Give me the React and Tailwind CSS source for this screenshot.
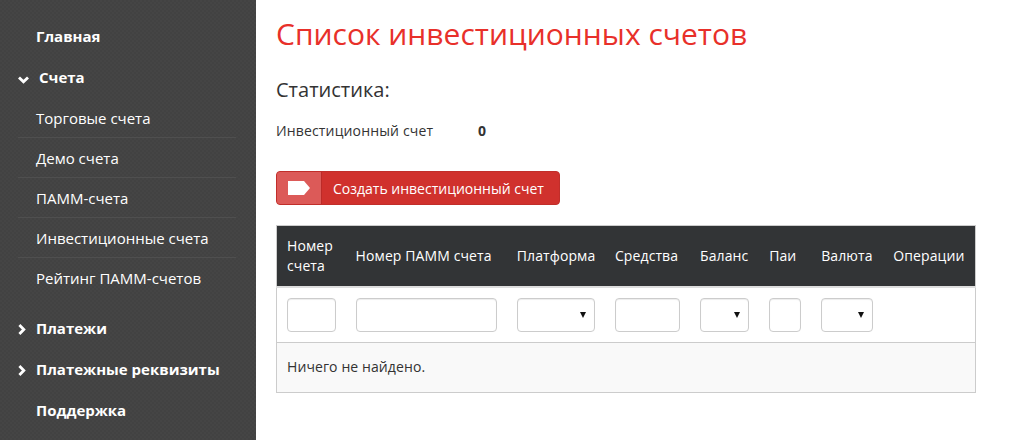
import React from 'react';

const subItems = ['Торговые счета', 'Демо счета', 'ПАММ-счета', 'Инвестиционные счета', 'Рейтинг ПАММ-счетов'];

const columns = [
  { title: <>Номер<br />счета</>, width: 'w-[69px]', filter: 'input', field: 'w-[49px]' },
  { title: 'Номер ПАММ счета', width: 'w-[161px]', filter: 'input', field: 'w-[141px]' },
  { title: 'Платформа', width: 'w-[98px]', filter: 'select', field: 'w-[78px]' },
  { title: 'Средства', width: 'w-[85px]', filter: 'input', field: 'w-[65px]' },
  { title: 'Баланс', width: 'w-[69px]', filter: 'select', field: 'w-[49px]' },
  { title: 'Паи', width: 'w-[52px]', filter: 'input', field: 'w-[32px]' },
  { title: 'Валюта', width: 'w-[72px]', filter: 'select', field: 'w-[52px]' },
  { title: 'Операции', width: 'w-[92px]' },
];

const ArrowDown = () => (
  <svg className="absolute left-[18px] top-[19px] w-[11px] h-[8px]" viewBox="0 0 11 8">
    <path d="M1 1.4L5.5 5.8L10 1.4" fill="none" stroke="#ffffff" strokeWidth="2.8" />
  </svg>
);

const ArrowRight = () => (
  <svg className="absolute left-[18px] top-[16px] w-[8px] h-[11px]" viewBox="0 0 8 11">
    <path d="M1.4 1L5.8 5.5L1.4 10" fill="none" stroke="#ffffff" strokeWidth="2.8" />
  </svg>
);

const MainItem = ({ label, icon }) => (
  <div className="h-[41px] flex items-center relative pl-[36px] text-[15px] font-bold text-white">
    {icon}
    {label}
  </div>
);

const Sidebar = () => (
  <aside className="w-[256px] h-[440px] shrink-0 bg-[#444444] bg-[repeating-conic-gradient(#424242_0_25%,#454545_0_50%)] bg-[length:4px_4px] pt-[16px]">
    <MainItem label="Главная" />
    <MainItem label={<span className="ml-[3px]">Счета</span>} icon={<ArrowDown />} />
    <div className="pb-[10px]">
      {subItems.map((item) => (
        <div key={item} className="ml-[18px] mr-[20px] h-[40px] flex items-center border-b border-[#4f4f4f] pt-[2px] last:border-b-0 last:pt-0 pl-[18px] text-[15px] text-white">
          {item}
        </div>
      ))}
    </div>
    <MainItem label="Платежи" icon={<ArrowRight />} />
    <MainItem label="Платежные реквизиты" icon={<ArrowRight />} />
    <MainItem label="Поддержка" />
  </aside>
);

const Filter = ({ type, field }) => {
  if (!type) return null;
  return (
    <div className={`${field} h-[34px] relative border border-[#cccccc] rounded-[4px] bg-white shadow-[inset_0_1px_1px_rgba(0,0,0,0.075)]`}>
      {type === 'select' && (
        <svg className="absolute right-[8px] top-[13px] w-[6px] h-[6px]" viewBox="0 0 6 6">
          <path d="M0 0H6L3 6Z" fill="#111111" />
        </svg>
      )}
    </div>
  );
};

export default function App() {
  return (
    <div className="w-[1009px] h-[440px] flex bg-white overflow-hidden font-['Open_Sans',sans-serif] text-[#333333]">
      <Sidebar />
      <main className="pl-[20px] flex-1">
        <h1 className="mt-[14px] text-[30px] leading-[39px] text-[#e8302a]">Список инвестиционных счетов</h1>
        <h2 className="mt-[24px] text-[20px] leading-[25px]">Статистика:</h2>
        <div className="mt-[19px] flex text-[14px] leading-[20px] tracking-[0.15px]">
          <span className="w-[202px]">Инвестиционный счет</span>
          <span className="font-bold">0</span>
        </div>
        <button className="mt-[30px] h-[34px] w-[284px] flex items-stretch rounded-[4px] overflow-hidden border border-[#c12e2a] bg-[#d0312d] text-white text-[14px]">
          <span className="w-[45px] shrink-0 flex items-center justify-center bg-[#dc5a58] border-r border-[#bb2b28]">
            <svg className="w-[22px] h-[14px]" viewBox="0 0 22 14">
              <path d="M0 0H16L22 7L16 14H0Z" fill="#ffffff" />
            </svg>
          </span>
          <span className="pl-[11px] self-center">Создать инвестиционный счет</span>
        </button>
        <table className="mt-[20px] w-[700px] table-fixed border border-[#cccccc] border-collapse text-[14px] tracking-[0.1px]">
          <thead>
            <tr className="bg-[#323436] text-white h-[61px] border-b-2 border-[#dddddd]">
              {columns.map((col, i) => (
                <th key={i} className={`${col.width} pl-[10px] pr-0 text-left font-normal leading-[20px]`}>{col.title}</th>
              ))}
            </tr>
          </thead>
          <tbody>
            <tr className="h-[56px] border-b border-[#cccccc]">
              {columns.map((col, i) => (
                <td key={i} className="pl-[10px] pr-0 align-middle">
                  <Filter type={col.filter} field={col.field} />
                </td>
              ))}
            </tr>
            <tr className="h-[50px] bg-[#f9f9f9]">
              <td colSpan={8} className="pl-[10px] pb-[2px]">Ничего не найдено.</td>
            </tr>
          </tbody>
        </table>
      </main>
    </div>
  );
}
